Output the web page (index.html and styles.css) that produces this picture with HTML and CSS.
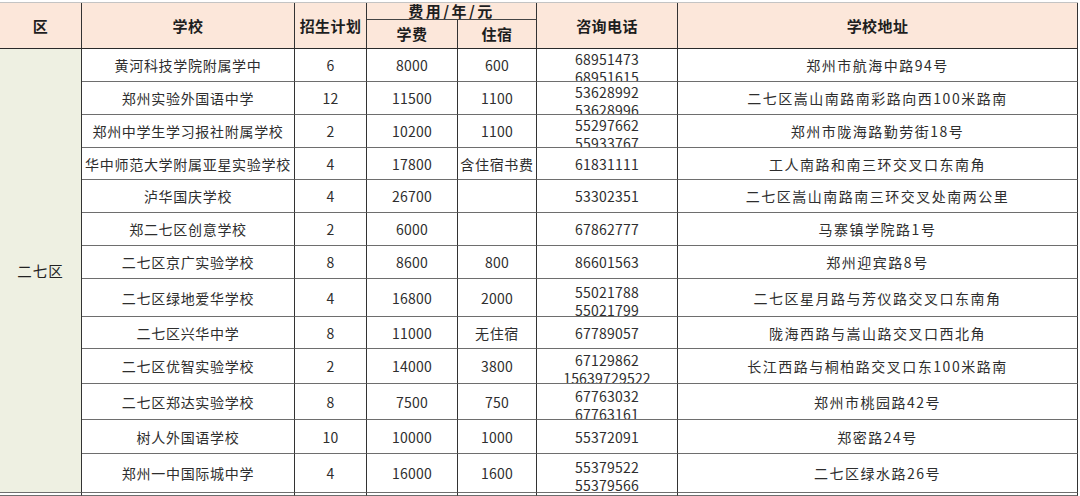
FILE: index.html
```html
<!DOCTYPE html>
<html lang="zh-CN">
<head>
<meta charset="utf-8">
<title>二七区学校招生</title>
<link rel="stylesheet" href="styles.css">
</head>
<body>
<div class="sheet">
  <div class="c h span-r">区</div>
  <div class="c h span-r">学校</div>
  <div class="c h span-r">招生计划</div>
  <div class="c h span-c fee">费用/年/元</div>
  <div class="c h span-r">咨询电话</div>
  <div class="c h span-r addr-h">学校地址</div>
  <div class="c h">学费</div>
  <div class="c h">住宿</div>

  <div class="c district">二七区</div>

  <div class="c name">黄河科技学院附属学中</div><div class="c num">6</div><div class="c num">8000</div><div class="c num">600</div><div class="c ph">68951473<br>68951615</div><div class="c addr">郑州市航海中路94号</div>
  <div class="c name">郑州实验外国语中学</div><div class="c num">12</div><div class="c num">11500</div><div class="c num">1100</div><div class="c ph">53628992<br>53628996</div><div class="c addr">二七区嵩山南路南彩路向西100米路南</div>
  <div class="c name">郑州中学生学习报社附属学校</div><div class="c num">2</div><div class="c num">10200</div><div class="c num">1100</div><div class="c ph">55297662<br>55933767</div><div class="c addr">郑州市陇海路勤劳街18号</div>
  <div class="c name">华中师范大学附属亚星实验学校</div><div class="c num">4</div><div class="c num">17800</div><div class="c name">含住宿书费</div><div class="c num">61831111</div><div class="c addr">工人南路和南三环交叉口东南角</div>
  <div class="c name">泸华国庆学校</div><div class="c num">4</div><div class="c num">26700</div><div class="c num"></div><div class="c num">53302351</div><div class="c addr">二七区嵩山南路南三环交叉处南两公里</div>
  <div class="c name">郑二七区创意学校</div><div class="c num">2</div><div class="c num">6000</div><div class="c num"></div><div class="c num">67862777</div><div class="c addr">马寨镇学院路1号</div>
  <div class="c name">二七区京广实验学校</div><div class="c num">8</div><div class="c num">8600</div><div class="c num">800</div><div class="c num">86601563</div><div class="c addr">郑州迎宾路8号</div>
  <div class="c name">二七区绿地爱华学校</div><div class="c num">4</div><div class="c num">16800</div><div class="c num">2000</div><div class="c ph">55021788<br>55021799</div><div class="c addr">二七区星月路与芳仪路交叉口东南角</div>
  <div class="c name">二七区兴华中学</div><div class="c num">8</div><div class="c num">11000</div><div class="c name">无住宿</div><div class="c num">67789057</div><div class="c addr">陇海西路与嵩山路交叉口西北角</div>
  <div class="c name">二七区优智实验学校</div><div class="c num">2</div><div class="c num">14000</div><div class="c num">3800</div><div class="c ph">67129862<br>15639729522</div><div class="c addr">长江西路与桐柏路交叉口东100米路南</div>
  <div class="c name">二七区郑达实验学校</div><div class="c num">8</div><div class="c num">7500</div><div class="c num">750</div><div class="c ph">67763032<br>67763161</div><div class="c addr">郑州市桃园路42号</div>
  <div class="c name">树人外国语学校</div><div class="c num">10</div><div class="c num">10000</div><div class="c num">1000</div><div class="c num">55372091</div><div class="c addr">郑密路24号</div>
  <div class="c name">郑州一中国际城中学</div><div class="c num">4</div><div class="c num">16000</div><div class="c num">1600</div><div class="c ph">55379522<br>55379566</div><div class="c addr">二七区绿水路26号</div>

  <div class="c"></div><div class="c"></div><div class="c"></div><div class="c"></div><div class="c"></div><div class="c"></div><div class="c"></div>
</div>
</body>
</html>
```
FILE: styles.css
```css
html, body {
  margin: 0;
  padding: 0;
  background: #ffffff;
  overflow: hidden;
}
body {
  padding-top: 2px;
  width: 1080px;
  height: 494px;
  font-family: "Noto Sans CJK SC", "Liberation Sans", sans-serif;
  color: #2e2e2e;
}
.sheet {
  display: grid;
  width: 1078px;
  grid-template-columns: 82px 213px 72px 91px 79px 141px 400px;
  grid-template-rows: 17px 29px 33px 33px 33px 32px 33px 33px 33px 38px 32px 35px 36px 34px 39px 3px;
  border-top: 1px solid #c4c4c4;
}
.c {
  box-sizing: border-box;
  border-right: 1px solid #333333;
  border-bottom: 1px solid #6e6e6e;
  display: flex;
  align-items: center;
  justify-content: center;
  overflow: hidden;
  font-size: 14px;
  line-height: 18px;
  white-space: nowrap;
  text-align: center;
}
.h {
  background: #fce7da;
  font-weight: bold;
  font-size: 15px;
  color: #1e1e1e;
  letter-spacing: 0.4px;
  border-bottom-color: #2a2a2a;
}
.span-r {
  grid-row: span 2;
}
.span-c {
  grid-column: span 2;
}
.fee {
  letter-spacing: 2.5px;
  line-height: 16px;
  border-bottom-color: #444444;
}
.district {
  grid-row: span 13;
  background: #eef0e2;
  letter-spacing: 1px;
  color: #222222;
  font-size: 14.5px;
}
.name {
  letter-spacing: 0.7px;
}
.num {
  letter-spacing: 0.2px;
}
.addr {
  letter-spacing: 1.5px;
}
.ph {
  flex-direction: column;
  padding-top: 6px;
  letter-spacing: 0.2px;
}
```
